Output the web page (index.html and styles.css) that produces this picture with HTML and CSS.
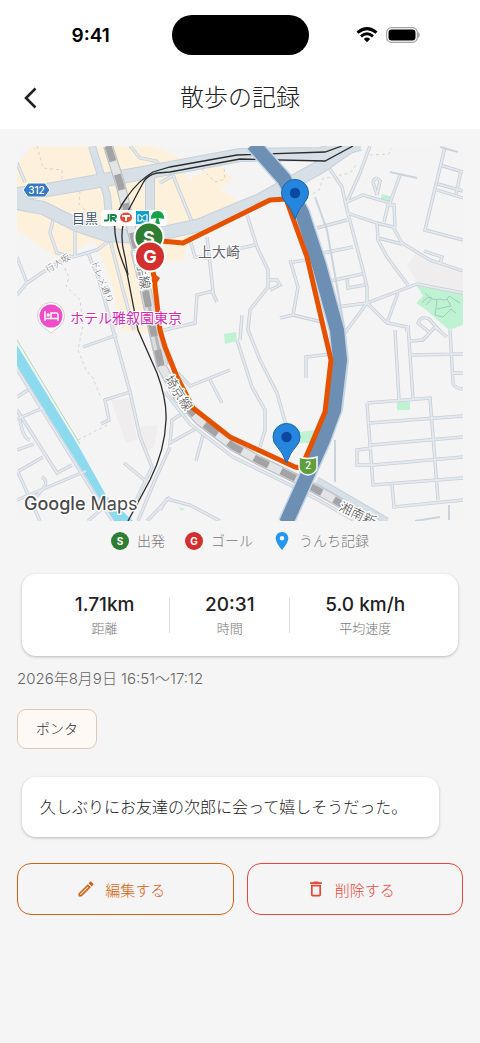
FILE: index.html
```html
<!DOCTYPE html>
<html lang="ja">
<head>
    <meta charset="utf-8">
    <title>散歩の記録</title>
    <meta name="viewport" content="width=device-width, initial-scale=1">
    <link rel="stylesheet" href="styles.css">
</head>
<body>
    <header class="header">
        <div class="statusBar">
            <span class="time">9:41</span>
            <div class="island"></div>
            <div class="statusIcons">
                <svg width="22" height="16" viewBox="0 0 22 16" fill="none" stroke="#000" stroke-width="3">
                    <path d="M1.5 5.6Q11 -2.4 20.5 5.6"/>
                    <path d="M5 9.3Q11 4.2 17 9.3"/>
                    <path d="M7.8 11.9Q11 9.3 14.2 11.9L11 15.2Z" fill="#000" stroke="none"/>
                </svg>
                <svg width="35" height="16" viewBox="0 0 35 16">
                    <rect x="0.6" y="0.6" width="30.8" height="14.8" rx="5" fill="none" stroke="#a3a3a3" stroke-width="1.2"/>
                    <rect x="2.5" y="2.5" width="27" height="11" rx="3.2" fill="#000"/>
                    <path d="M32.6 5.5q1.6 2.5 0 5z" fill="#888" stroke="#888" stroke-width=".5"/>
                </svg>
            </div>
        </div>
        <div class="appBar">
            <button class="back" aria-label="戻る">
                <svg width="14" height="22" viewBox="0 0 14 22" fill="none" stroke="#222" stroke-width="2.6"><path d="M12.500 1.500L3 11L12.500 20.500"/></svg>
            </button>
            <h1>散歩の記録</h1>
        </div>
    </header>

    <main class="content">
        <svg class="map" viewBox="17 146 446 375" role="img" aria-label="散歩ルートの地図">
            <defs>
                <g id="streets">
                    <!-- north west -->
                    <path d="M17 163L25 182M53 220L50 233L57 253L73 257L97 250L110 240M75 228L75 256M67 257L43 272L27 283L17 295M17 257L27 283M88 253L98 277L113 330L130 392L140 437L152 467L133 507M110 240L123 290L134 330M130 146L140 158L156 161L163 169M172 173L192 222M172 176L160 183"/>
                    <!-- centre -->
                    <path d="M247 215L257 247L268 270L268 287L250 310L248 330L260 360L277 393L286 425M207 237L213 291L197 295L195 323L160 331M212 291L217 302M190 240L195 257L210 258M233 250L255 245M268 280L277 280L280 285L270 290M290 260L298 287L293 315L280 318M293 262L307 260M293 315L322 322M237 340L252 387L265 410L265 430L260 447M178 373L190 386L230 370M210 380L222 403M306 378V357L331 354"/>
                    <path d="M242 315L240 340M185 412L172 420L170 443L197 428M203 435L196 461M138 521L155 480L170 447M147 521L170 497M160 510L167 499L190 505L220 521"/>
                    <!-- north east -->
                    <path d="M327 165L342 187L347 210L363 270L367 287L367 303M370 146L360 173L347 202L363 195L390 203L400 175M377 195L373 182Q376 175 380 181L377 195M347 213L377 223L393 227L402 243L430 260L463 271M377 223L378 240L387 257L408 285M378 238L402 244M384 222L388 205L394 205L395 227M317 228L347 220M323 253L353 247M330 281L362 274M337 307L367 303L417 284L463 293M347 279L348 288L365 285M367 303L347 330L331 354M367 303L387 323L407 327V332M398 293L387 323M424 251L442 257L440 264"/>
                    <path d="M445 147L425 230L463 240M440 165L463 172M438 184L463 191M437 190L463 198M461 171L456 194M429 332L418 323Q421 315 429 319L440 331"/>
                    <!-- south east -->
                    <path d="M395 330L399 400M408 325L413 399M410 341L423 340L435 327L447 337M410 355L463 354M450 330L453 383Q454 388 463 389M453 373H463M367 403L430 398L438 500M367 403L373 485L463 478M369 423L463 416M371 445L463 437M373 465L463 457M372 448L357 450V465L373 465M392 485L394 507L463 500"/>
                    <!-- south west -->
                    <path d="M17 369L93 492L113 521M17 410L57 473L72 465M17 419L43 408M17 397L28 390M17 472L43 457M17 470L40 521M17 500L86 471M88 521L103 508M83 347L117 335M130 392L105 400L109 420L101 424M124 463L147 482M42 477Q50 482 41 491L27 506M17 450L34 444M20 420Q23 439 30 440"/>
                </g>
                <path id="rail" d="M108 146L120 183L140 263L153 330L161 365L178 397L200 421L233 446L260 461L293 477L330 497L370 521"/>
                <g id="pin">
                    <path d="M0 26Q-4 15 -9.5 9.5A13.5 13.5 0 1 1 9.5 9.5Q4 15 0 26Z" fill="#2685dc" stroke="#1768ad" stroke-width="1"/>
                    <circle r="5.2" fill="#0c47a1"/>
                </g>
            </defs>

            <rect x="17" y="146" width="446" height="375" fill="#f5f4f5"/>
            <path d="M32 146H153L180 158L188 180L218 163L233 180L220 190L249 207L187 244L184 260L154 263L157 300L150 334L120 330L112 284L94 240L60 260L17 230V165Z" fill="#fdf1dc"/>
            <path d="M417 252L463 273V291L419 285L407 265ZM111 400L130 398L137 440L126 443L118 420ZM140 427L158 425L154 447L145 453Z" fill="#efedee"/>
            <path d="M417 286L463 293V325L449 330L425 309L416 303L423 296ZM382 194L392 197L390 203L380 201ZM224 334L236 332L237 341L225 344ZM298 432L316 430L312 443H300ZM397 402H410V410H397ZM178 507L185 509L182 511Z" fill="#bff1d3"/>
            <path d="M17 345L78 445L107 497L133 521H114L93 488L17 366Z" fill="#8bdaee"/>
            <path d="M17 340L80 444" stroke="#a6dcb0" stroke-width="1"/>
            <path class="footpath" d="M37 146L43 168L62 170V188L80 191L79 204L88 213M60 257L69 278L66 286L80 300L83 325L78 350L86 370L93 378L101 398M78 440L107 425M202 169L215 182L225 179L224 167M313 194L320 189L322 179L350 173L356 165M370 155L389 154L391 148"/>

            <use href="#streets" class="streetEdge"/>
            <use href="#streets" class="streetFill"/>
            <path d="M425 293Q432 302 440 299Q447 302 449 296L460 303M422 303Q428 295 432 298L426 305M437 300L435 315L443 317L451 309L456 313M437 309L451 306L447 299" fill="none" stroke="#9fcdb9" stroke-width="1"/>
            <path d="M390 172L417 178M440 147L458 152M415 521L440 517M449 505V520M335 440V482M315 197L327 230L344 326L348 360L342 410L317 463" fill="none" stroke="#cbd4dc" stroke-width="2"/>

            <!-- main roads -->
            <g class="roadEdge">
                <path d="M17 194L53 189L110 179L165 169L240 155L320 154L360 144"/>
                <path d="M17 203L43 208L77 225L107 235L137 237L163 233L200 225L260 200L320 167L356 142"/>
                <path d="M150 173V232" stroke-width="10"/>
                <path d="M92 146L107 195L111 238" stroke-width="8"/>
                <path d="M317 480L387 521" stroke-width="7"/>
            </g>
            <g class="roadFill">
                <path d="M17 194L53 189L110 179L165 169L240 155L320 154L360 144"/>
                <path d="M17 203L43 208L77 225L107 235L137 237L163 233L200 225L260 200L320 167L356 142"/>
                <path d="M150 173V232" stroke-width="8"/>
                <path d="M92 146L107 195L111 238" stroke-width="6"/>
                <path d="M317 480L387 521" stroke-width="5"/>
            </g>

            <!-- railways -->
            <path d="M165 392L190 424L233 457L290 485L322 502L355 521" class="streetEdge"/>
            <path d="M165 392L190 424L233 457L290 485L322 502L355 521" class="streetFill"/>
            <use href="#rail" fill="none" stroke="#b8bcc1" stroke-width="10"/>
            <use href="#rail" fill="none" stroke="#e2e4e6" stroke-width="8"/>
            <path d="M136 250L143 278L155 333L163 366" fill="none" stroke="#bfc2c5" stroke-width="12"/>
            <path d="M136 250L143 278L155 333L163 366" fill="none" stroke="#dadcde" stroke-width="10"/>
            <path d="M136 250L143 278L155 333L163 366" fill="none" stroke="#b4b7bb" stroke-width="3"/>
            <use href="#rail" fill="none" stroke="#a3a3a5" stroke-width="7" stroke-dasharray="16 14"/>
            <path class="line" d="M342 146L325 152L237 155L170 167L153 172Q138 181 127 197Q116 212 115 223Q113 240 127 273L138 330L157 373Q167 400 166 420Q165 450 150 480L128 521"/>
            <path class="line" d="M353 146L325 161L240 159L170 172L157 173Q147 175 143 183L127 213Q118 232 125 257L128 275"/>

            <!-- expressway -->
            <path d="M253 144L284 179L302 213L319 265L337 330L340 360L334 410L323 440L303 485L286 523" fill="none" stroke="#c5d5e3" stroke-width="17"/>
            <path d="M253 144L284 179L302 213L319 265L337 330L340 360L334 410L323 440L303 485L286 523" fill="none" stroke="#6c8fb3" stroke-width="14"/>

            <!-- walked route -->
            <path d="M150 240L183 243L270 200L286 199L307 257L320 313L331 360L325 412L309 450L301 468L295 467L230 437L193 408L177 377L165 347L160 330L154 277L150 257" fill="none" stroke="#e65100" stroke-width="5" stroke-linejoin="round"/>
            <path d="M152 272L160 278L155 286Z" fill="#e65100"/>

            <!-- labels -->
            <path d="M28 183H45L50 190L45 197H28L23 190Z" fill="#3579c7" stroke="#fff" stroke-width="1"/>
            <text x="36.5" y="193.5" class="routeNo">312</text>
            <rect x="101" y="210" width="66" height="16" rx="4" fill="#fff"/>
            <text x="72" y="223" class="place">目黒</text>
            <path d="M108.500 214V219Q108.500 220.500 107 220.500H104M111 221.500V215H114Q116 215 116 216.500Q116 218 114 218H112L116 221.500" fill="none" stroke="#118649" stroke-width="1.8"/>
            <ellipse cx="126" cy="217.500" rx="6" ry="5" fill="#e94b35"/>
            <path d="M122 216H130M126 216V221" stroke="#fff" stroke-width="2"/>
            <rect x="136" y="211" width="13" height="13" fill="#11a0cc"/>
            <path d="M138 215Q140 214 142 217Q144 214 147 215V221H144L142 219L141 221H138Z" fill="none" stroke="#fff" stroke-width="1.2"/>
            <path d="M151 219Q151 211 157.500 211Q164 211 164 219L158.500 218L160 224H155L156.500 218Z" fill="#13a34a"/>
            <text x="198" y="257" class="place area">上大崎</text>
            <text transform="translate(48 273) rotate(-32)" class="street">行人坂</text>
            <text transform="translate(91 262) rotate(68)" class="street">ドレメ通り</text>
            <text transform="translate(135 251) rotate(81)" class="railName">山手線</text>
            <text transform="translate(164 379) rotate(57)" class="railName">埼京線</text>
            <text transform="translate(338 510) rotate(25)" class="railName">湘南新</text>
            <path d="M51 333L42 326A13.500 13.500 0 1 1 60 326Z" fill="#fff" stroke="#c4c4c4" stroke-width=".8"/>
            <circle cx="51" cy="316" r="11.500" fill="#f04bc9"/>
            <path d="M45 311V321M45 318.500H58V321M58 318V315Q58 313 56 313H51V318" fill="none" stroke="#fff" stroke-width="1.5"/>
            <circle cx="48.200" cy="315" r="1.700" fill="#fff"/>
            <text x="70" y="323" class="hotel">ホテル雅叙園東京</text>
            <text x="24" y="510" class="google"><tspan class="googleBold">Google</tspan> Maps</text>
            <path d="M299 457Q308 460 317 457V468Q316 474 308 475Q300 474 299 468Z" fill="#5f9f3f" stroke="#fff" stroke-width="1.5"/>
            <text x="308" y="469" class="routeNo">2</text>

            <!-- markers -->
            <use href="#pin" x="295" y="193"/>
            <use href="#pin" x="286.5" y="437"/>
            <circle cx="149" cy="237" r="14.5" fill="#2e7d32" stroke="#fff" stroke-width="2"/>
            <text x="149" y="244" class="markerText">S</text>
            <circle cx="150" cy="256.5" r="15" fill="#d32f2f" stroke="#fff" stroke-width="2"/>
            <text x="150" y="263" class="markerText">G</text>
        </svg>

        <div class="legend">
            <div class="legendItem"><span class="dot start">S</span>出発</div>
            <div class="legendItem"><span class="dot goal">G</span>ゴール</div>
            <div class="legendItem">
                <svg width="18" height="18" viewBox="3 2 18 20" fill="#2196f3"><path d="M12 2C8.13 2 5 5.13 5 9c0 5.25 7 13 7 13s7-7.75 7-13c0-3.87-3.13-7-7-7zm0 9.5a2.5 2.5 0 1 1 0-5 2.5 2.5 0 0 1 0 5z"/></svg>
                うんち記録
            </div>
        </div>

        <section class="card stats">
            <div class="stat"><strong>1.71km</strong><span>距離</span></div>
            <div class="divider"></div>
            <div class="stat"><strong>20:31</strong><span>時間</span></div>
            <div class="divider"></div>
            <div class="stat"><strong>5.0 km/h</strong><span>平均速度</span></div>
        </section>

        <p class="date">2026年8月9日 16:51〜17:12</p>
        <span class="dog">ポンタ</span>
        <p class="card memo">久しぶりにお友達の次郎に会って嬉しそうだった。</p>

        <div class="actions">
            <button class="edit">
                <svg width="20" height="20" viewBox="0 0 24 24" fill="currentColor"><path d="M14.06 9.02l.92.92L5.92 19H5v-.92l9.06-9.06M17.66 3c-.25 0-.51.1-.7.29l-1.83 1.83 3.75 3.75 1.83-1.83c.39-.39.39-1.02 0-1.41l-2.34-2.34c-.2-.2-.45-.29-.71-.29zm-3.6 3.19L3 17.25V21h3.75L17.81 9.94l-3.75-3.75z"/></svg>
                編集する
            </button>
            <button class="delete">
                <svg width="20" height="20" viewBox="0 0 24 24" fill="currentColor"><path d="M6 19c0 1.1.9 2 2 2h8c1.1 0 2-.9 2-2V7H6v12zM8 9h8v10H8V9zm7.5-5l-1-1h-5l-1 1H5v2h14V4h-3.5z"/></svg>
                削除する
            </button>
        </div>
    </main>
</body>
</html>
```
FILE: styles.css
```css
* {
    box-sizing: border-box;
    margin: 0;
    padding: 0;
}
body {
    background: #f5f5f5;
    color: #222;
    font-family: Inter, "Noto Sans CJK JP", sans-serif;
    font-weight: 300;
}
button {
    background: none;
    border: none;
    font: inherit;
    cursor: pointer;
}
svg {
    display: block;
    flex-shrink: 0;
}

/* header */
.header {
    background: #fff;
}
.statusBar {
    display: grid;
    grid-template-columns: 1fr 137px 1fr;
    align-items: center;
    padding-top: 15px;
}
.time {
    padding-left: 10px;
    font-size: 19px;
    font-weight: 600;
    color: #000;
    text-align: center;
}
.island {
    height: 40px;
    border-radius: 20px;
    background: #000;
}
.statusIcons {
    display: flex;
    justify-content: center;
    gap: 8px;
    padding-right: 12px;
}
.appBar {
    display: grid;
    grid-template-columns: 60px 1fr 60px;
    align-items: center;
    height: 74px;
    padding-top: 12px;
}
.back {
    display: flex;
    justify-content: center;
    padding: 8px;
}
.appBar h1 {
    line-height: 36px;
    font-size: 24px;
    font-weight: 300;
    text-align: center;
}

/* map */
.content {
    padding: 17px;
}
.map {
    width: 100%;
    height: auto;
}
.map text {
    font-family: Inter, "Noto Sans CJK JP", sans-serif;
}
.footpath {
    fill: none;
    stroke: #d3d3d6;
    stroke-width: 1;
    stroke-dasharray: 3 3;
}
.streetEdge {
    fill: none;
    stroke: #c8cfd7;
    stroke-width: 3.4;
}
.streetFill {
    fill: none;
    stroke: #e3e9ee;
    stroke-width: 1.8;
}
.roadEdge {
    fill: none;
    stroke: #c6d1da;
    stroke-width: 14;
}
.roadFill {
    fill: none;
    stroke: #d7e0e7;
    stroke-width: 12;
}
.line {
    fill: none;
    stroke: #2b2b2b;
    stroke-width: 1.3;
}
.place, .street, .railName, .hotel, .google {
    paint-order: stroke;
    stroke: #fff;
    stroke-width: 2;
    stroke-linejoin: round;
}
.place {
    font-size: 13px;
    font-weight: 400;
    fill: #42566b;
}
.area {
    font-size: 14px;
    fill: #62666b;
}
.street {
    font-size: 9px;
    fill: #666;
}
.railName {
    font-size: 13px;
    fill: #444;
    stroke-width: 3;
}
.hotel {
    font-size: 14px;
    font-weight: 400;
    fill: #d52bb4;
}
.google {
    font-size: 18px;
    font-weight: 400;
    fill: #4a4a4a;
    stroke-width: 3;
}
.googleBold {
    font-weight: 500;
}
.routeNo {
    font-size: 10px;
    font-weight: 500;
    fill: #fff;
    text-anchor: middle;
}
.markerText {
    font-size: 18px;
    font-weight: 700;
    fill: #fff;
    text-anchor: middle;
}

/* legend */
.legend {
    display: flex;
    justify-content: center;
    gap: 20px;
    padding-top: 10px;
    line-height: 20px;
    font-size: 14px;
    color: #777;
}
.legendItem {
    display: flex;
    align-items: center;
    gap: 8px;
}
.dot {
    width: 18px;
    height: 18px;
    border-radius: 50%;
    line-height: 18px;
    font-size: 10px;
    font-weight: 700;
    color: #fff;
    text-align: center;
}
.start {
    background: #2e7d32;
}
.goal {
    background: #d32f2f;
}

/* cards */
.card {
    margin: 0 5px;
    border-radius: 14px;
    background: #fff;
    box-shadow: 0 1px 3px rgba(0, 0, 0, 0.25);
}
.stats {
    display: flex;
    justify-content: space-evenly;
    align-items: center;
    margin-top: 23px;
    padding: 18px;
}
.stat {
    display: flex;
    flex-direction: column;
    align-items: center;
}
.stat strong {
    line-height: 26px;
    font-size: 19px;
    font-weight: 500;
}
.stat span {
    line-height: 20px;
    font-size: 13px;
    color: #777;
}
.divider {
    width: 1px;
    height: 35px;
    background: #ddd;
}
.date {
    margin-top: 13px;
    line-height: 20px;
    font-size: 15px;
    color: #666;
}
.dog {
    display: inline-block;
    margin-top: 20px;
    padding: 0 18px;
    border: 1px solid #dfc8ba;
    border-radius: 9px;
    background: #fff9f5;
    line-height: 38px;
    font-size: 14px;
    color: #333;
    vertical-align: top;
}
.memo {
    width: fit-content;
    margin-top: 28px;
    padding: 18px 32px 18px 18px;
    line-height: 24px;
    font-size: 16px;
    color: #222;
}

/* buttons */
.actions {
    display: flex;
    gap: 13px;
    margin-top: 26px;
}
.actions button {
    display: flex;
    flex: 1;
    justify-content: center;
    align-items: center;
    gap: 9px;
    height: 52px;
    padding-right: 9px;
    border: 1px solid;
    border-radius: 14px;
    font-size: 15px;
}
.actions .edit {
    color: #d9600f;
}
.actions .delete {
    color: #ea443b;
}
```
